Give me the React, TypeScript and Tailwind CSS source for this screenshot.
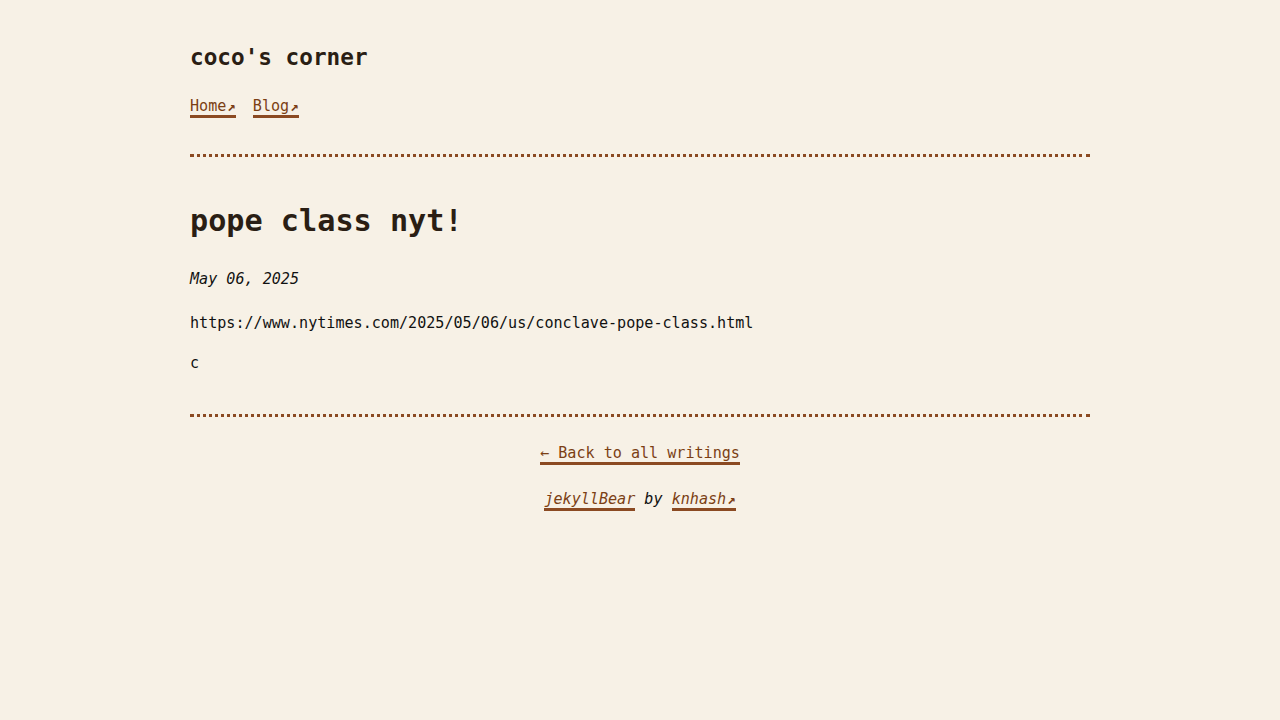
import React from "react";

const mono = { fontFamily: '"DejaVu Sans Mono", "Liberation Mono", monospace' };

function Arrow() {
  return <span className="ml-[1px] text-[14px] font-bold">↗</span>;
}

export default function App() {
  return (
    <div className="min-h-screen w-full bg-[#f7f1e6] text-[#111]" style={mono}>
      <div className="mx-auto w-[900px] pt-[44px] text-[15.1px]">
        <header>
          <div className="text-[22.7px] leading-[27px] font-bold text-[#2a1e14]">coco's corner</div>
          <nav className="mt-[27px] flex gap-[17px] leading-[24px]">
            <a className="border-b-[3px] border-[#8b4a22] text-[#7b3f14] leading-[17px]">Home<Arrow /></a>
            <a className="border-b-[3px] border-[#8b4a22] text-[#7b3f14] leading-[17px]">Blog<Arrow /></a>
          </nav>
        </header>
        <div className="mt-[36px] border-t-[3px] border-dotted border-[#8b4a22]" />
        <main>
          <h1 className="mt-[46px] text-[30.2px] leading-[36px] font-bold text-[#2a1e14]">pope class nyt!</h1>
          <p className="mt-[28px] italic leading-[24px]">May 06, 2025</p>
          <p className="mt-[20px] leading-[24px]">https://www.nytimes.com/2025/05/06/us/conclave-pope-class.html</p>
          <p className="mt-[16px] leading-[24px]">c</p>
        </main>
        <div className="mt-[39px] border-t-[3px] border-dotted border-[#8b4a22]" />
        <footer className="flex flex-col items-center">
          <div className="mt-[24px] leading-[24px]">
            <a className="border-b-[3px] border-[#8b4a22] text-[#7b3f14]">← Back to all writings</a>
          </div>
          <div className="mt-[22px] leading-[24px] italic">
            <a className="border-b-[3px] border-[#8b4a22] text-[#7b3f14]">jekyllBear</a>
            <span className="text-[#111]"> by </span>
            <a className="border-b-[3px] border-[#8b4a22] text-[#7b3f14]">knhash<Arrow /></a>
          </div>
        </footer>
      </div>
    </div>
  );
}
